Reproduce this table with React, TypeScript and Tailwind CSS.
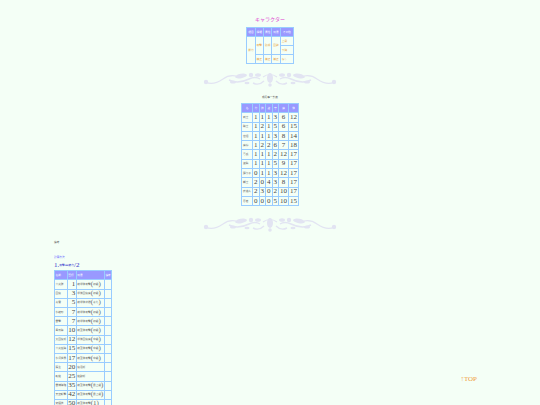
import React from "react";

// Japanese text is rendered very small so it keeps the footprint of the reference
const J = ({ children }: { children: React.ReactNode }) => (
  <span className="font-['Noto_Sans_CJK_JP',sans-serif] text-[2.7px] leading-[3px] align-middle">
    {children}
  </span>
);

const Ornament = () => (
  <svg
    viewBox="0 0 134 17"
    width={134}
    height={17}
    className="block mx-auto"
    fill="#e2e4f2"
    stroke="#e2e4f2"
  >
    <g>
      <circle cx="3" cy="11" r="2.2" stroke="none" />
      <path d="M3 11 C8 14 14 12 20 8 C24 5 28 4 33 5" fill="none" strokeWidth="1.2" />
      <path d="M26 9 C32 12 40 11 46 8 C50 6 54 6 57 8" fill="none" strokeWidth="1.4" />
      <ellipse cx="38" cy="5" rx="6" ry="2.2" stroke="none" transform="rotate(-10 38 5)" />
      <circle cx="48" cy="4" r="2.2" stroke="none" />
      <path d="M50 12 C54 14 58 13 61 10" fill="none" strokeWidth="1.4" />
      <ellipse cx="55" cy="4" rx="3" ry="1.8" stroke="none" />
      <ellipse cx="30" cy="11" rx="3" ry="1.5" stroke="none" />
      <ellipse cx="44" cy="12" rx="2.5" ry="1.3" stroke="none" />
    </g>
    <g transform="translate(134 0) scale(-1 1)">
      <circle cx="3" cy="11" r="2.2" stroke="none" />
      <path d="M3 11 C8 14 14 12 20 8 C24 5 28 4 33 5" fill="none" strokeWidth="1.2" />
      <path d="M26 9 C32 12 40 11 46 8 C50 6 54 6 57 8" fill="none" strokeWidth="1.4" />
      <ellipse cx="38" cy="5" rx="6" ry="2.2" stroke="none" transform="rotate(-10 38 5)" />
      <circle cx="48" cy="4" r="2.2" stroke="none" />
      <path d="M50 12 C54 14 58 13 61 10" fill="none" strokeWidth="1.4" />
      <ellipse cx="55" cy="4" rx="3" ry="1.8" stroke="none" />
      <ellipse cx="30" cy="11" rx="3" ry="1.5" stroke="none" />
      <ellipse cx="44" cy="12" rx="2.5" ry="1.3" stroke="none" />
    </g>
    <ellipse cx="67" cy="7" rx="3" ry="5" stroke="none" />
    <circle cx="67" cy="14" r="1.8" stroke="none" />
    <path d="M60 6 Q67 1 74 6" fill="none" strokeWidth="1.2" />
  </svg>
);

const growth: [string, number[]][] = [
  ["剣士", [1, 1, 1, 3, 6, 12]],
  ["騎士", [1, 2, 1, 5, 6, 15]],
  ["僧侶", [1, 1, 1, 3, 8, 14]],
  ["魔導", [1, 2, 2, 6, 7, 18]],
  ["弓兵", [1, 1, 1, 2, 12, 17]],
  ["盗賊", [1, 1, 1, 5, 9, 17]],
  ["踊り子", [0, 1, 1, 3, 12, 17]],
  ["戦士", [2, 0, 4, 3, 8, 17]],
  ["吟遊人", [2, 3, 0, 2, 10, 17]],
  ["忍者", [0, 0, 0, 5, 10, 15]],
];

const spells: [string, number, string, string][] = [
  ["火炎弾", 1, "敵単体攻撃", "初級"],
  ["回復", 3, "単体回復魔", "初級"],
  ["毒霧", 5, "敵単体状態", "毒化"],
  ["氷結刃", 7, "敵単体攻撃", "初級"],
  ["雷撃", 7, "敵単体攻撃", "初級"],
  ["風刃陣", 10, "敵全体攻撃", "初級"],
  ["大回復術", 12, "単体回復魔", "中級"],
  ["火炎嵐陣", 15, "敵全体攻撃", "中級"],
  ["氷河世界", 17, "敵全体攻撃", "中級"],
  ["蘇生", 20, "復活術", ""],
  ["転移", 25, "移動術", ""],
  ["雷神降臨", 35, "敵全体攻撃", "最上級"],
  ["天空斬撃", 42, "敵全体攻撃", "最上級"],
  ["究極技", 50, "敵全体攻撃", "1"],
];

export default function App() {
  return (
    <div className="min-h-screen w-full bg-[#f4fff6] font-['Liberation_Serif',serif] text-[7px] text-[#444]">
      <div className="pt-[12px] text-center leading-[12px] text-[#e040d0]">
        <span className="font-['Noto_Sans_CJK_JP',sans-serif] text-[5px] leading-[5px] align-middle">キャラクター</span>
      </div>

      <table className="mx-auto mt-[3px] border-collapse border border-[#99ccff] text-[#e8a040]">
        <thead>
          <tr className="bg-[#9999ff] text-white">
            <th className="border border-[#99ccff] px-[1px] h-[9px] leading-[7px] font-normal"><J>項目</J></th>
            <th className="border border-[#99ccff] px-[1px] h-[9px] leading-[7px] font-normal"><J>種類</J></th>
            <th className="border border-[#99ccff] px-[1px] h-[9px] leading-[7px] font-normal"><J>属性</J></th>
            <th className="border border-[#99ccff] px-[1px] h-[9px] leading-[7px] font-normal"><J>効果</J></th>
            <th className="border border-[#99ccff] px-[2px] h-[9px] leading-[7px] font-normal"><J>その他</J></th>
          </tr>
        </thead>
        <tbody>
          <tr>
            <td rowSpan={3} className="border border-[#99ccff] px-[1px] leading-[7px]"><J>能力</J></td>
            <td rowSpan={2} className="border border-[#99ccff] px-[1px] leading-[7px]"><J>攻撃</J></td>
            <td rowSpan={2} className="border border-[#99ccff] px-[1px] leading-[7px]"><J>防御</J></td>
            <td rowSpan={2} className="border border-[#99ccff] px-[1px] leading-[7px]"><J>回避</J></td>
            <td className="border border-[#99ccff] px-[1px] h-[9px] leading-[7px]"><J>上昇</J></td>
          </tr>
          <tr>
            <td className="border border-[#99ccff] px-[1px] h-[9px] leading-[7px]"><J>下降</J></td>
          </tr>
          <tr>
            <td className="border border-[#99ccff] px-[1px] h-[9px] leading-[7px]"><J>補正</J></td>
            <td className="border border-[#99ccff] px-[1px] h-[9px] leading-[7px]"><J>補正</J></td>
            <td className="border border-[#99ccff] px-[1px] h-[9px] leading-[7px]"><J>補正</J></td>
            <td className="border border-[#99ccff] px-[1px] h-[9px] leading-[7px]"><J>なし</J></td>
          </tr>
        </tbody>
      </table>

      <div className="mt-[7px]">
        <Ornament />
      </div>

      <div className="mt-[6px] text-center leading-[7px] text-[#555]">
        <J>成長率一覧表</J>
      </div>

      <table className="mx-auto mt-[2px] border-collapse border border-[#99ccff] text-center">
        <thead>
          <tr className="bg-[#9999ff] text-white">
            {["名", "力", "技", "速", "守", "魔", "体"].map((h) => (
              <th key={h} className="border border-[#99ccff] px-[1px] h-[9.3px] leading-[7px] font-normal">
                <J>{h}</J>
              </th>
            ))}
          </tr>
        </thead>
        <tbody>
          {growth.map(([name, vals]) => (
            <tr key={name}>
              <td className="border border-[#99ccff] px-[1px] h-[9.3px] leading-[7px] text-left text-[#666]">
                <J>{name}</J>
              </td>
              {vals.map((v, i) => (
                <td key={i} className="border border-[#99ccff] px-[1px] h-[9.3px] leading-[7px]">
                  {v}
                </td>
              ))}
            </tr>
          ))}
        </tbody>
      </table>

      <div className="mt-[10px]">
        <Ornament />
      </div>

      <div className="flex justify-between pl-[54px] pr-[63px]">
        <div className="flex flex-col">
          <p className="mt-[5px] leading-[8px] text-[#555]"><J>備考</J></p>
          <p className="mt-[7px] leading-[8px] text-[#6666ff]"><J>計算方法</J></p>
          <p className="leading-[8px] text-[#3333cc]">
            1.<J>攻撃</J>=<J>筋力</J>/2
          </p>
          <table className="mt-[1px] border-collapse border border-[#99ccff]">
            <thead>
              <tr className="bg-[#9999ff] text-white">
                <th className="border border-[#99ccff] px-[0.5px] h-[9.2px] leading-[7px] font-normal text-left"><J>名前</J></th>
                <th className="border border-[#99ccff] px-[0.5px] h-[9.2px] leading-[7px] font-normal text-left"><J>習得</J></th>
                <th className="border border-[#99ccff] px-[0.5px] h-[9.2px] leading-[7px] font-normal text-left"><J>効果</J></th>
                <th className="border border-[#99ccff] px-[0.5px] h-[9.2px] leading-[7px] font-normal text-left"><J>備考</J></th>
              </tr>
            </thead>
            <tbody>
              {spells.map(([name, lv, eff, note]) => (
                <tr key={name}>
                  <td className="border border-[#99ccff] px-[0.5px] h-[9.2px] leading-[7px] text-[#666]"><J>{name}</J></td>
                  <td className="border border-[#99ccff] px-[0.5px] h-[9.2px] leading-[7px] text-right">{lv}</td>
                  <td className="border border-[#99ccff] px-[0.5px] h-[9.2px] leading-[7px] text-[#666]">
                    <J>{eff}</J>
                    {note && (
                      <>
                        ({note === "1" ? "1" : <J>{note}</J>})
                      </>
                    )}
                  </td>
                  <td className="border border-[#99ccff] px-[0.5px] h-[9.2px] leading-[7px]"></td>
                </tr>
              ))}
            </tbody>
          </table>
        </div>
        <a href="#" className="pt-[142px] leading-[8px] text-[#f0a040]">
          ↑TOP
        </a>
      </div>
    </div>
  );
}
